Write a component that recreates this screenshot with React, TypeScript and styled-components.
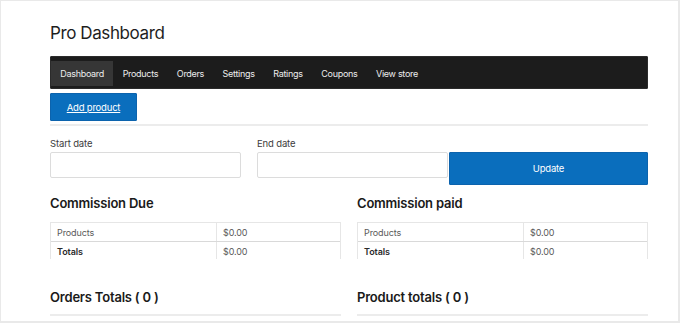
import React from 'react';
import styled, { createGlobalStyle } from 'styled-components';

const GlobalStyle = createGlobalStyle`
  body {
    margin: 0;
    background: #ffffff;
    font-family: Inter, "Noto Sans", sans-serif;
    color: #1e1e1e;
  }
`;

const Frame = styled.div`
  box-sizing: border-box;
  width: 680px;
  height: 323px;
  overflow: hidden;
  border: 1px solid #e9e9e9;
  border-right-width: 2px;
  border-bottom-width: 2px;
  padding: 0 30px 0 49px;
`;

const Title = styled.h1`
  margin: 0;
  padding-top: 21px;
  height: 34px;
  font-size: 17px;
  font-weight: 400;
  letter-spacing: -0.4px;
  line-height: 22px;
  color: #1e1e1e;
`;

const NavBar = styled.nav`
  box-sizing: border-box;
  display: flex;
  align-items: center;
  height: 33px;
  padding-top: 1px;
  background: #1c1c1c;
  border: 1px solid #2b2b2b;
  border-radius: 1px;
`;

const NavItem = styled.a<{ $active?: boolean }>`
  display: flex;
  align-items: center;
  height: 25px;
  padding: 0 9.3px;
  font-size: 9px;
  letter-spacing: -0.3px;
  color: #ececec;
  background: ${(p) => (p.$active ? '#363636' : 'transparent')};
  text-decoration: none;
`;

const PrimaryButton = styled.button`
  box-sizing: border-box;
  font-family: inherit;
  background: #0a6ebd;
  color: #ffffff;
  border: 1px solid #0c63ad;
  border-radius: 1px;
  font-size: 9.5px;
  letter-spacing: -0.2px;
  cursor: pointer;
`;

const AddButton = styled(PrimaryButton)`
  margin-top: 4px;
  width: 87px;
  height: 28px;
  text-decoration: underline;
`;

const Divider = styled.div`
  height: 2px;
  background: #ececec;
  margin-top: 3px;
`;

const DateRow = styled.div`
  display: flex;
  align-items: flex-start;
  margin-top: 12px;
`;

const Field = styled.div<{ $width: number; $gap: number }>`
  display: flex;
  flex-direction: column;
  width: ${(p) => p.$width}px;
  margin-right: ${(p) => p.$gap}px;
`;

const Label = styled.label`
  font-size: 9.5px;
  letter-spacing: -0.15px;
  line-height: 12px;
  color: #3c3c3c;
  margin-bottom: 2px;
`;

const Input = styled.input`
  box-sizing: border-box;
  height: 26px;
  border: 1px solid #dcdcdc;
  border-radius: 2px;
  background: #fff;
`;

const UpdateButton = styled(PrimaryButton)`
  margin-top: 14px;
  width: 199px;
  height: 33px;
`;

const Columns = styled.div`
  display: grid;
  grid-template-columns: 291px 291px;
  column-gap: 16px;
`;

const Section = styled.section``;

const SectionTitle = styled.h2<{ $top: number }>`
  margin: ${(p) => p.$top}px 0 0;
  font-size: 13px;
  font-weight: 600;
  letter-spacing: -0.2px;
  line-height: 18px;
  color: #1a1a1a;
`;

const Table = styled.div`
  margin-top: 10px;
  height: 36px;
  overflow: hidden;
  border: 1px solid #e6e6e6;
  border-bottom: none;
`;

const Row = styled.div<{ $first?: boolean }>`
  display: grid;
  grid-template-columns: 166px 1fr;
  height: 18px;
  border-bottom: ${(p) => (p.$first ? '1px solid #d9d9d9' : 'none')};
`;

const Cell = styled.div<{ $bold?: boolean; $divider?: boolean }>`
  display: flex;
  align-items: center;
  padding-left: 6px;
  font-size: 9px;
  letter-spacing: -0.1px;
  font-weight: ${(p) => (p.$bold ? 600 : 400)};
  color: ${(p) => (p.$bold ? '#2a2a2a' : '#5a5a5a')};
  border-right: ${(p) => (p.$divider ? '1px solid #e6e6e6' : 'none')};
`;

const TotalLine = styled.div`
  height: 2px;
  margin-top: 8px;
  background: #ececec;
`;

const navItems = ['Dashboard', 'Products', 'Orders', 'Settings', 'Ratings', 'Coupons', 'View store'];

function CommissionTable(): JSX.Element {
  return (
    <Table>
      <Row $first>
        <Cell $divider>Products</Cell>
        <Cell>$0.00</Cell>
      </Row>
      <Row>
        <Cell $divider $bold>
          Totals
        </Cell>
        <Cell>$0.00</Cell>
      </Row>
    </Table>
  );
}

export default function App(): JSX.Element {
  return (
    <>
      <GlobalStyle />
      <Frame>
        <Title>Pro Dashboard</Title>
        <NavBar>
          {navItems.map((item, i) => (
            <NavItem key={item} href="#" $active={i === 0}>
              {item}
            </NavItem>
          ))}
        </NavBar>
        <AddButton>Add product</AddButton>
        <Divider />
        <DateRow>
          <Field $width={191} $gap={16}>
            <Label>Start date</Label>
            <Input />
          </Field>
          <Field $width={191} $gap={1}>
            <Label>End date</Label>
            <Input />
          </Field>
          <UpdateButton>Update</UpdateButton>
        </DateRow>
        <Columns>
          <Section>
            <SectionTitle $top={9}>Commission Due</SectionTitle>
            <CommissionTable />
            <SectionTitle $top={29}>Orders Totals ( 0 )</SectionTitle>
            <TotalLine />
          </Section>
          <Section>
            <SectionTitle $top={9}>Commission paid</SectionTitle>
            <CommissionTable />
            <SectionTitle $top={29}>Product totals ( 0 )</SectionTitle>
            <TotalLine />
          </Section>
        </Columns>
      </Frame>
    </>
  );
}
